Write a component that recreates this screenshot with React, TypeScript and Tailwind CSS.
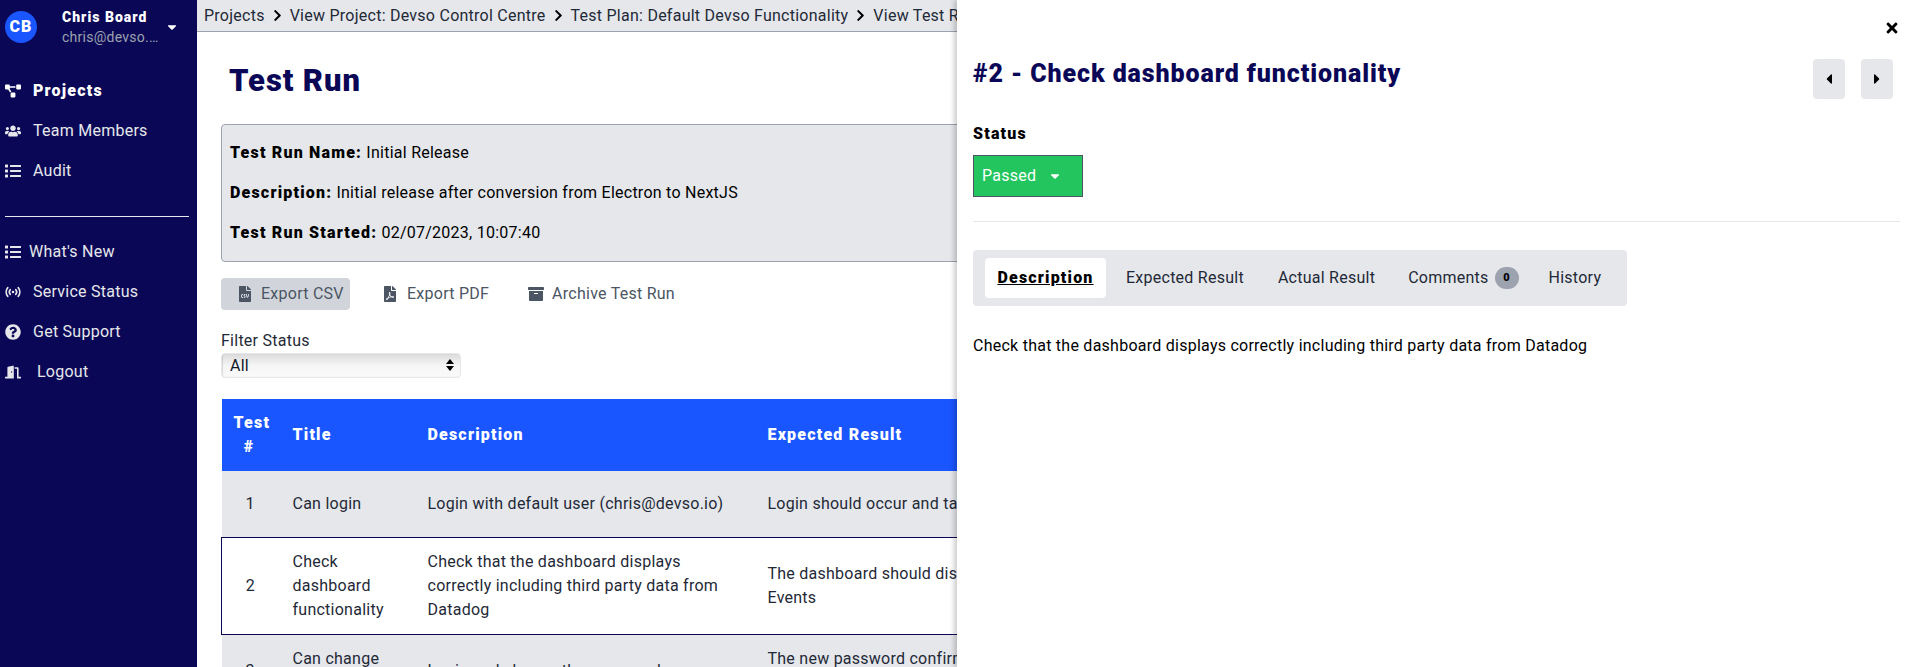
import {
  FaArchive,
  FaCaretDown,
  FaCaretLeft,
  FaCaretRight,
  FaChevronRight,
  FaDoorOpen,
  FaFileCsv,
  FaFilePdf,
  FaList,
  FaProjectDiagram,
  FaQuestionCircle,
  FaTimes,
  FaUsers,
} from "react-icons/fa";

const FONT = "font-['Roboto',sans-serif]";
// the bold labels in the picture run wide, so they all get the same tracking
const HEAVY = "font-black tracking-[1.2px]";

const crumbs = [
  "Projects",
  "View Project: Devso Control Centre",
  "Test Plan: Default Devso Functionality",
  "View Test Run",
];

const rows = [
  {
    id: 1,
    title: "Can login",
    description: "Login with default user (chris@devso.io)",
    expected: "Login should occur and take you to the dashboard",
  },
  {
    id: 2,
    title: "Check dashboard functionality",
    description: "Check that the dashboard displays correctly including third party data from Datadog",
    expected: "The dashboard should display the Datadog Monitors, Logs, Dashboards and other Events",
    selected: true,
  },
  {
    id: 3,
    title: "Can change password",
    description: "Login and change the password",
    expected: "The new password confirmation message should show and the login should then work with the new password",
  },
];

function StatusIcon() {
  return (
    <svg viewBox="0 0 16 16" className="h-4 w-4" fill="none" stroke="currentColor" strokeWidth="1.6" strokeLinecap="round">
      <circle cx="8" cy="8" r="1.3" fill="currentColor" stroke="none" />
      <path d="M5.3 5.6a3.6 3.6 0 0 0 0 4.8M10.7 5.6a3.6 3.6 0 0 1 0 4.8" />
      <path d="M2.8 3.6a6.6 6.6 0 0 0 0 8.8M13.2 3.6a6.6 6.6 0 0 1 0 8.8" />
    </svg>
  );
}

function NavItem({ icon, label, active, gap = "gap-3" }: { icon: React.ReactNode; label: string; active?: boolean; gap?: string }) {
  return (
    <a className={`flex h-10 items-center pl-[5px] ${gap} ${active ? `${HEAVY} text-white` : "text-[#e5e7eb]"}`}>
      <span className="flex w-4 justify-center text-[16px]">{icon}</span>
      {label}
    </a>
  );
}

function Sidebar() {
  return (
    <aside className="w-[197px] shrink-0 bg-[#0b0757]">
      <div className="flex h-[54px] items-center pl-[5px]">
        <div className="flex h-8 w-8 items-center justify-center rounded-full bg-[#1a56ff] text-[16px] font-black tracking-[1.2px] text-white">CB</div>
        <div className="ml-[25px] w-[97px]">
          <p className="text-[14px] leading-5 font-black tracking-[1px] whitespace-nowrap text-white">Chris Board</p>
          <p className="truncate text-[14px] leading-5 text-[#9ca3af]">chris@devso.io</p>
        </div>
        <FaCaretDown className="ml-[6px] text-[14px] text-white" />
      </div>
      <nav className="mt-[17px]">
        <NavItem icon={<FaProjectDiagram />} label="Projects" active />
        <NavItem icon={<FaUsers />} label="Team Members" />
        <NavItem icon={<FaList />} label="Audit" />
      </nav>
      <hr className="mt-[25px] mr-2 mb-[15px] ml-[5px] border-[#e5e7eb]" />
      <nav>
        <NavItem icon={<FaList />} label="What's New" gap="gap-2" />
        <NavItem icon={<StatusIcon />} label="Service Status" />
        <NavItem icon={<FaQuestionCircle />} label="Get Support" />
        <NavItem icon={<FaDoorOpen />} label="Logout" gap="gap-4" />
      </nav>
    </aside>
  );
}

function Info({ label, value }: { label: string; value: string }) {
  return (
    <p className="leading-6">
      <b className={HEAVY}>{label}</b> {value}
    </p>
  );
}

function Main() {
  return (
    <main className="min-w-0 flex-1 overflow-hidden">
      <div className="flex h-8 items-center gap-[6px] border-b border-[#9ca3af] bg-[#e5e7eb] pl-[7px] whitespace-nowrap text-[#1f2937]">
        {crumbs.map((crumb, i) => (
          <span key={crumb} className="flex items-center gap-[6px]">
            {i > 0 && <FaChevronRight className="text-[13px] text-black" />}
            {crumb}
          </span>
        ))}
      </div>
      <div className="px-6">
        <h1 className="mt-[27px] pl-2 text-[31px] leading-[44px] font-black tracking-[0.9px] text-[#0b0757]">Test Run</h1>
        <div className="mt-[21px] flex h-[138px] flex-col justify-center gap-4 rounded border border-[#9ca3af] bg-[#e5e7eb] pl-2 text-black">
          <Info label="Test Run Name:" value="Initial Release" />
          <Info label="Description:" value="Initial release after conversion from Electron to NextJS" />
          <Info label="Test Run Started:" value="02/07/2023, 10:07:40" />
        </div>
        <div className="mt-4 flex items-center text-[#4b5563]">
          <button className="flex h-8 w-[129px] items-center gap-2 rounded bg-[#d1d5db] pl-4">
            <FaFileCsv className="text-[16px]" /> Export CSV
          </button>
          <button className="ml-8 flex items-center gap-[9px]">
            <FaFilePdf className="text-[16px]" /> Export PDF
          </button>
          <button className="ml-[39px] flex items-center gap-2">
            <FaArchive className="text-[16px]" /> Archive Test Run
          </button>
        </div>
        <label className="mt-[19px] block leading-6 text-[#1f2937]">Filter Status</label>
        <div className="relative w-60">
          <select className="h-[25px] w-full appearance-none rounded border border-[#e5e7eb] bg-gradient-to-b from-[#dcdcdc] via-[#f5f5f5] to-[#fafafa] pl-2 text-[#111827] shadow-[inset_1px_0_1px_rgba(0,0,0,0.12)]">
            <option>All</option>
          </select>
          <span className="absolute top-[6px] right-[7px] flex flex-col gap-[2px]">
            <span className="h-0 w-0 border-x-[4px] border-b-[5px] border-x-transparent border-b-black" />
            <span className="h-0 w-0 border-x-[4px] border-t-[5px] border-x-transparent border-t-black" />
          </span>
        </div>
        <table className="mt-[21px] w-full table-fixed border-collapse text-[#1f2937]">
          <colgroup>
            <col className="w-[55px]" />
            <col className="w-[135px]" />
            <col className="w-[340px]" />
            <col className="w-[640px]" />
            <col />
          </colgroup>
          <thead>
            <tr className="bg-[#1a56ff] text-white">
              <th className={`px-3 py-3 text-center leading-6 ${HEAVY}`}>Test #</th>
              <th className={`px-4 text-left ${HEAVY}`}>Title</th>
              <th className={`px-4 text-left ${HEAVY}`}>Description</th>
              <th className={`px-4 text-left ${HEAVY}`}>Expected Result</th>
              <th className={`px-4 text-left ${HEAVY}`}>Status</th>
            </tr>
          </thead>
          <tbody>
            {rows.map((row) => (
              <tr key={row.id} className={row.selected ? "border border-[#0b0757] bg-white" : "h-[66px] bg-[#e5e7eb]"}>
                <td className="py-3 pl-[2px] text-center">{row.id}</td>
                <td className="px-4 py-3">{row.title}</td>
                <td className="px-4 py-3">{row.description}</td>
                <td className="px-4 py-3">{row.expected}</td>
                <td className="px-4 py-3">Passed</td>
              </tr>
            ))}
          </tbody>
        </table>
      </div>
    </main>
  );
}

function DetailPanel() {
  return (
    <section className="absolute top-0 right-0 bottom-0 w-[953px] bg-white pt-5 pr-[10px] pl-4 text-black shadow-[-3px_0_5px_rgba(0,0,0,0.2)]">
      <div className="flex justify-end">
        <FaTimes className="text-[16px]" />
      </div>
      <div className="mt-[23px] flex items-start justify-between pr-[7px]">
        <h2 className="mt-[-1px] text-[25px] leading-8 font-black tracking-[0.9px] text-[#0b0757]">#2 - Check dashboard functionality</h2>
        <div className="flex gap-4">
          <button className="flex h-10 w-8 items-center justify-center rounded bg-[#e5e7eb]">
            <FaCaretLeft className="text-[16px]" />
          </button>
          <button className="flex h-10 w-8 items-center justify-center rounded bg-[#e5e7eb]">
            <FaCaretRight className="text-[16px]" />
          </button>
        </div>
      </div>
      <p className={`mt-[23px] leading-6 ${HEAVY}`}>Status</p>
      <button className="mt-[9px] flex h-[42px] w-[110px] items-center gap-3 border border-[#4b5563] bg-[#22c55e] pl-2 text-white">
        Passed <FaCaretDown className="text-[14px]" />
      </button>
      <hr className="mt-6 border-[#e5e7eb]" />
      <div className="mt-7 flex h-14 w-[654px] items-center rounded bg-[#e5e7eb] pl-3 text-[#1f2937]">
        <span className={`flex h-10 w-[121px] items-center justify-center rounded bg-white text-black underline ${HEAVY}`}>Description</span>
        <span className="ml-5">Expected Result</span>
        <span className="ml-[34px]">Actual Result</span>
        <span className="ml-[33px] flex items-center gap-[6px]">
          Comments
          <span className="flex h-[22px] w-6 items-center justify-center rounded-full bg-[#9ca3af] text-[11px] font-black text-black">0</span>
        </span>
        <span className="ml-[30px]">History</span>
      </div>
      <p className="mt-7 leading-6">Check that the dashboard displays correctly including third party data from Datadog</p>
    </section>
  );
}

export default function App() {
  return (
    <div className={`relative flex h-[667px] overflow-hidden bg-white text-[16px] tracking-[0.25px] ${FONT}`}>
      <Sidebar />
      <Main />
      <DetailPanel />
    </div>
  );
}
